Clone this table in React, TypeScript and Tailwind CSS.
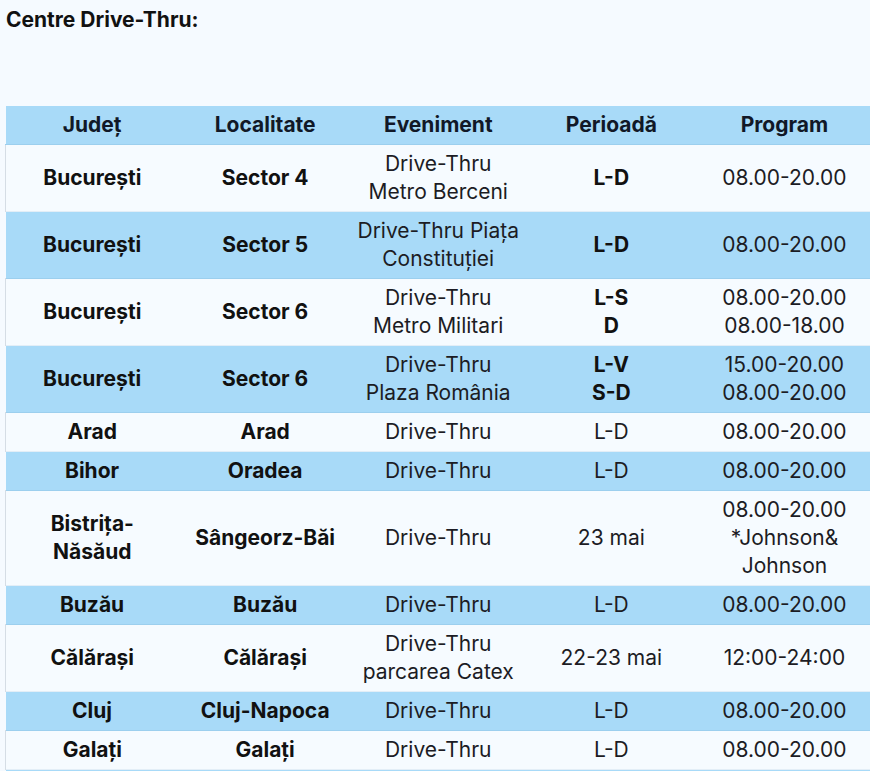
import React from "react";

type Row = {
  judet: string[];
  loc: string;
  ev: string[];
  per: string[];
  perBold: boolean;
  prog: string[];
};

const rows: Row[] = [
  { judet: ["București"], loc: "Sector 4", ev: ["Drive-Thru", "Metro Berceni"], per: ["L-D"], perBold: true, prog: ["08.00-20.00"] },
  { judet: ["București"], loc: "Sector 5", ev: ["Drive-Thru Piața", "Constituției"], per: ["L-D"], perBold: true, prog: ["08.00-20.00"] },
  { judet: ["București"], loc: "Sector 6", ev: ["Drive-Thru", "Metro Militari"], per: ["L-S", "D"], perBold: true, prog: ["08.00-20.00", "08.00-18.00"] },
  { judet: ["București"], loc: "Sector 6", ev: ["Drive-Thru", "Plaza România"], per: ["L-V", "S-D"], perBold: true, prog: ["15.00-20.00", "08.00-20.00"] },
  { judet: ["Arad"], loc: "Arad", ev: ["Drive-Thru"], per: ["L-D"], perBold: false, prog: ["08.00-20.00"] },
  { judet: ["Bihor"], loc: "Oradea", ev: ["Drive-Thru"], per: ["L-D"], perBold: false, prog: ["08.00-20.00"] },
  { judet: ["Bistrița-", "Năsăud"], loc: "Sângeorz-Băi", ev: ["Drive-Thru"], per: ["23 mai"], perBold: false, prog: ["08.00-20.00", "*Johnson&", "Johnson"] },
  { judet: ["Buzău"], loc: "Buzău", ev: ["Drive-Thru"], per: ["L-D"], perBold: false, prog: ["08.00-20.00"] },
  { judet: ["Călărași"], loc: "Călărași", ev: ["Drive-Thru", "parcarea Catex"], per: ["22-23 mai"], perBold: false, prog: ["12:00-24:00"] },
  { judet: ["Cluj"], loc: "Cluj-Napoca", ev: ["Drive-Thru"], per: ["L-D"], perBold: false, prog: ["08.00-20.00"] },
  { judet: ["Galați"], loc: "Galați", ev: ["Drive-Thru"], per: ["L-D"], perBold: false, prog: ["08.00-20.00"] },
  { judet: [""], loc: "", ev: [""], per: [""], perBold: false, prog: [""] },
];

function Lines({ lines }: { lines: string[] }) {
  return (
    <>
      {lines.map((l, i) => (
        <div key={i}>{l}</div>
      ))}
    </>
  );
}

export default function App() {
  return (
    <div
      className="w-[870px] h-[771px] overflow-hidden bg-[#f5faff] text-[#1c1c24]"
      style={{ fontFamily: "Inter, 'Liberation Sans', sans-serif" }}
    >
      <div className="pl-[6px] pt-[6px] text-[21px] leading-[28px] font-bold text-[#111]">
        Centre Drive-Thru:
      </div>
      <table className="ml-[5px] mt-[72px] w-[866px] table-fixed border-collapse text-[21px] leading-[28px] text-center">
        <thead>
          <tr className="bg-[#a8daf8] text-[#111827]">
            {["Județ", "Localitate", "Eveniment", "Perioadă", "Program"].map((h) => (
              <th key={h} className="py-[5px] font-bold border-b border-[#9ccfee]">
                {h}
              </th>
            ))}
          </tr>
        </thead>
        <tbody>
          {rows.map((r, i) => (
            <tr
              key={i}
              className={
                i % 2 === 0
                  ? "bg-[#f6fbff] border-b border-[#e3eef7]"
                  : "bg-[#a8daf8] border-b border-[#9ccfee]"
              }
            >
              <td className={"py-[5px] font-bold text-[#111] " + (i % 2 === 0 ? "border-l border-[#d5dde5]" : "")}>
                <Lines lines={r.judet} />
              </td>
              <td className="py-[5px] font-bold text-[#111]">{r.loc}</td>
              <td className="py-[5px]">
                <Lines lines={r.ev} />
              </td>
              <td className={r.perBold ? "py-[5px] font-bold text-[#111]" : "py-[5px]"}>
                <Lines lines={r.per} />
              </td>
              <td className="py-[5px]">
                <Lines lines={r.prog} />
              </td>
            </tr>
          ))}
        </tbody>
      </table>
    </div>
  );
}
